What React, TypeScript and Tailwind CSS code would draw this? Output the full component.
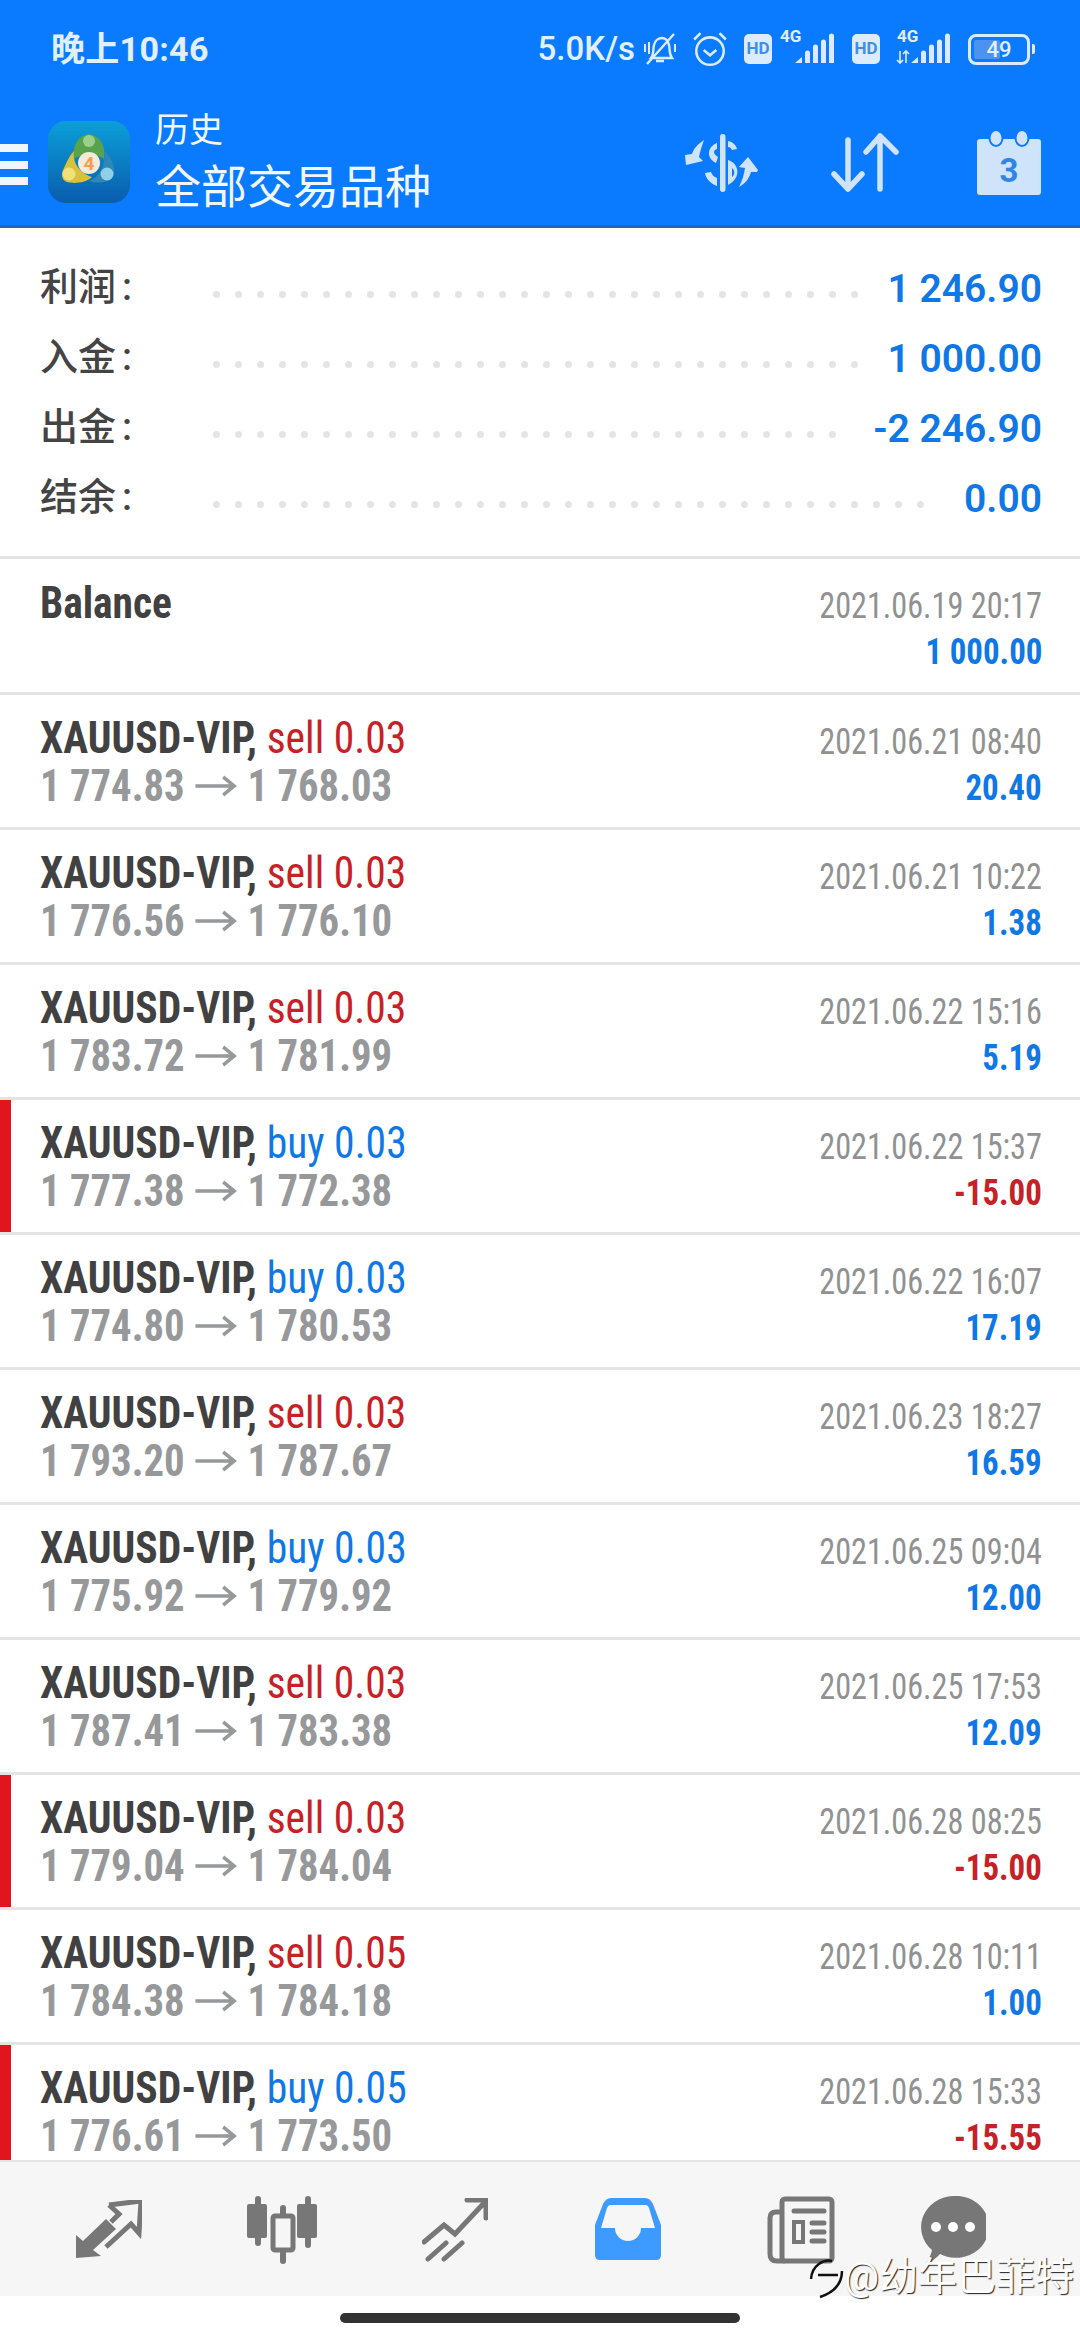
const trades = [
  { time: '2021.06.21 08:40', side: 'sell', lots: '0.03', open: '1 774.83', close: '1 768.03', profit: '20.40' },
  { time: '2021.06.21 10:22', side: 'sell', lots: '0.03', open: '1 776.56', close: '1 776.10', profit: '1.38' },
  { time: '2021.06.22 15:16', side: 'sell', lots: '0.03', open: '1 783.72', close: '1 781.99', profit: '5.19' },
  { time: '2021.06.22 15:37', side: 'buy', lots: '0.03', open: '1 777.38', close: '1 772.38', profit: '-15.00' },
  { time: '2021.06.22 16:07', side: 'buy', lots: '0.03', open: '1 774.80', close: '1 780.53', profit: '17.19' },
  { time: '2021.06.23 18:27', side: 'sell', lots: '0.03', open: '1 793.20', close: '1 787.67', profit: '16.59' },
  { time: '2021.06.25 09:04', side: 'buy', lots: '0.03', open: '1 775.92', close: '1 779.92', profit: '12.00' },
  { time: '2021.06.25 17:53', side: 'sell', lots: '0.03', open: '1 787.41', close: '1 783.38', profit: '12.09' },
  { time: '2021.06.28 08:25', side: 'sell', lots: '0.03', open: '1 779.04', close: '1 784.04', profit: '-15.00' },
  { time: '2021.06.28 10:11', side: 'sell', lots: '0.05', open: '1 784.38', close: '1 784.18', profit: '1.00' },
  { time: '2021.06.28 15:33', side: 'buy', lots: '0.05', open: '1 776.61', close: '1 773.50', profit: '-15.55' },
]

const stats = [
  { label: '利润', value: '1 246.90', dots: 30 },
  { label: '入金', value: '1 000.00', dots: 30 },
  { label: '出金', value: '-2 246.90', dots: 29 },
  { label: '结余', value: '0.00', dots: 33 },
]

function Signal({ arrows }: { arrows?: boolean }) {
  return (
    <svg width="58" height="32" viewBox="0 0 56 32" fill="#dcebff">
      <path d="M14 30 L21 24 V30 Z M24 30 V20 a2 2 0 0 1 5 0 V30 Z M32 30 V14 a2 2 0 0 1 5 0 V30 Z M40 30 V9 a2 2 0 0 1 5 0 V30 Z M48 30 V3 a2 2 0 0 1 5 0 V30 Z" />
      {arrows && <path d="M3 18 V30 M0 27 L3 30 L6 27 M9 30 V18 M6 21 L9 18 L12 21" stroke="#dcebff" strokeWidth="1.6" fill="none" />}
    </svg>
  )
}

function StatusBar() {
  return (
    <div className="h-[86px] flex items-start justify-between pl-[51px] pr-[45px] pt-[29px] text-[#e2efff]">
      <span className="text-[34px] leading-[40px] font-bold tracking-[0.3px]">晚上10:46</span>
      <div className="flex items-center h-[40px]">
        <span className="text-[33px] leading-[40px] font-medium mr-[7px]">5.0K/s</span>
        <svg className="mr-[13px]" width="36" height="34" viewBox="0 0 36 34" fill="none" stroke="#dcebff" strokeWidth="2.4">
          <path d="M9 26 C12 22 11 17 12 13 C13 8 17 6 20 6 C24 6 26 9 27 13 C28 18 27 22 30 26 Z M14 29 H22 M5 32 L32 2" />
          <path d="M3 12 V20 M7 10 V22 M33 12 V20" strokeWidth="2" />
        </svg>
        <svg className="mr-[15px]" width="38" height="38" viewBox="0 0 36 36" fill="none" stroke="#dcebff" strokeWidth="2.4">
          <circle cx="18" cy="20" r="13" />
          <path d="M12 19 L18 24 L24 19 M3 9 L9 3 M33 9 L27 3" />
        </svg>
        <div className="w-[28px] h-[30px] rounded-[5px] bg-[#dcebff] flex items-center justify-center text-[17px] font-bold text-[#3f8fe8] mr-[8px]">HD</div>
        <div className="relative w-[58px] h-[32px] mr-[14px]">
          <Signal />
          <span className="absolute left-0 top-[-6px] text-[17px] leading-[18px] font-bold">4G</span>
        </div>
        <div className="w-[28px] h-[30px] rounded-[5px] bg-[#dcebff] flex items-center justify-center text-[17px] font-bold text-[#3f8fe8] mr-[16px]">HD</div>
        <div className="relative w-[58px] h-[32px] mr-[14px]">
          <Signal arrows />
          <span className="absolute left-[1px] top-[-6px] text-[17px] leading-[18px] font-bold">4G</span>
        </div>
        <div className="w-[62px] h-[31px] rounded-[8px] border-[3px] border-[#dcebff] p-[3px] relative">
          <div className="h-full w-[26px] rounded-[2px] bg-[#4b93ee]" />
          <span className="absolute inset-0 flex items-center justify-center text-[22px] font-medium text-[#e2efff]">49</span>
        </div>
        <div className="w-[3px] h-[10px] rounded-r-[2px] bg-[#dcebff] ml-[2px]" />
      </div>
    </div>
  )
}

function MtLogo() {
  return (
    <svg width="82" height="82" viewBox="0 0 82 82">
      <defs>
        <linearGradient id="mt" x1="0" y1="0" x2="0" y2="1">
          <stop offset="0" stopColor="#0b9fd8" />
          <stop offset="1" stopColor="#0a5cae" />
        </linearGradient>
      </defs>
      <rect width="82" height="82" rx="18" fill="url(#mt)" />
      <path d="M41 13 C52 15 58 24 56 38 C50 33 32 33 26 38 C24 24 30 15 41 13 Z" fill="#5aa34c" />
      <circle cx="41" cy="20" r="6" fill="#9bd08c" />
      <path d="M26 30 C24 42 32 52 44 56 C38 62 26 63 19 61 C13 59 13 52 16 47 C19 41 21 35 26 30 Z" fill="#d9c23a" />
      <circle cx="21" cy="53" r="6.5" fill="#efe07b" />
      <path d="M56 30 C64 36 67 46 66 53 C65 60 52 64 41 60 C52 56 58 44 56 30 Z" fill="#2f86b8" />
      <circle cx="59" cy="53" r="6.5" fill="#8fd0e6" />
      <circle cx="41" cy="42" r="11" fill="#f4ead9" />
      <text x="41" y="49" textAnchor="middle" fontSize="19" fontWeight="700" fill="#f0a050" fontFamily="Roboto, sans-serif">4</text>
    </svg>
  )
}

function Header() {
  return (
    <div className="h-[142px] flex items-start border-b-[3px] border-[#1b69bd]">
      <div className="w-[28px] h-[41px] mt-[58px] flex flex-col justify-between">
        <div className="h-[8px] bg-[#eef6ff]" />
        <div className="h-[8px] bg-[#eef6ff]" />
        <div className="h-[8px] bg-[#eef6ff]" />
      </div>
      <div className="ml-[20px] mt-[35px]"><MtLogo /></div>
      <div className="ml-[25px] mt-[24px] text-[#f1f7ff] flex-1">
        <div className="text-[34px] leading-[40px]">历史</div>
        <div className="text-[46px] leading-[58px] mt-[8px]">全部交易品种</div>
      </div>
      <svg className="mt-[48px] mr-[-2px]" width="74" height="58" viewBox="0 0 74 58" fill="#cfe3fb">
        <rect x="35" y="0" width="5.5" height="58" rx="2.7" />
        <path d="M32 9 C22 13 21 24 31 29 L33 23 C28 20 28 16 32 15 Z M43 7 C48 8 51 11 52 15 L47 16 C46 14 45 13 43 13 Z M43 26 C54 29 57 44 43 51 Z M47 34 V43 C50 41 50 36 47 34 Z M32 38 V52 C26 50 21 45 20 39 L26 38 C27 41 29 43 32 44 Z" />
        <path d="M19 7 C12 12 9 15 7 21 L0 22 L1 32 L18 28 L14 24 C15 18 17 13 19 7 Z" transform="translate(0,-1)" />
        <path d="M54 53 C62 48 64 44 66 38 L72 38 L73 36 L63 23 L54 33 L60 34 C59 41 57 47 54 53 Z" />
      </svg>
      <svg className="ml-[74px] mt-[47px]" width="68" height="60" viewBox="0 0 68 60" fill="none" stroke="#cfe3fb" strokeWidth="5.5" strokeLinecap="round" strokeLinejoin="round">
        <path d="M17 7 V56 M3 41 L17 56 L31 41 M49 56 V3 M35 19 L49 3 L65 19" />
      </svg>
      <svg className="ml-[78px] mr-[39px] mt-[43px]" width="64" height="66" viewBox="0 0 64 66">
        <rect x="0" y="10" width="64" height="56" rx="3" fill="#cfe3fb" />
        <ellipse cx="19" cy="9" rx="6.5" ry="8" fill="#cfe3fb" stroke="#0a7bff" strokeWidth="2" />
        <ellipse cx="45" cy="9" rx="6.5" ry="8" fill="#cfe3fb" stroke="#0a7bff" strokeWidth="2" />
        <text x="32" y="53" textAnchor="middle" fontSize="33" fontWeight="700" fill="#2f86e6" fontFamily="Roboto, sans-serif">3</text>
      </svg>
    </div>
  )
}

function Trade({ t }: { t: (typeof trades)[number] }) {
  const loss = t.profit.startsWith('-')
  return (
    <div className="h-[135px] shrink-0 flex border-b-[3px] border-[#e4e4e4]">
      <div className={loss ? 'w-[11px] bg-[#e0161c]' : 'w-[11px]'} />
      <div className="flex-1 flex justify-between pl-[29px] pr-[38px] pt-[19px]">
        <div>
          <div className="text-[44px] leading-[48px] [font-stretch:75%] whitespace-nowrap origin-left scale-x-[0.945] w-[520px]">
            <span className="font-bold text-[#414141]">XAUUSD-VIP, </span>
            <span className={t.side === 'sell' ? 'text-[#c62127]' : 'text-[#0f78e6]'}>{t.side} {t.lots}</span>
          </div>
          <div className="text-[44px] leading-[48px] [font-stretch:75%] flex items-center whitespace-nowrap origin-left scale-x-[0.925] w-[520px] font-bold text-[#97989a]">
            <span>{t.open}</span>
            <svg className="mx-[11px]" width="46" height="22" viewBox="0 0 44 22" fill="none" stroke="#97989a" strokeWidth="3.5">
              <path d="M0 11 H42 M30 2 L42 11 L30 20" />
            </svg>
            <span>{t.close}</span>
          </div>
        </div>
        <div className="flex flex-col items-end">
          <div className="text-[37px] leading-[47px] mt-[4px] [font-stretch:75%] whitespace-nowrap origin-right scale-x-[0.87] text-[#919191]">{t.time}</div>
          <div className={'text-[37px] leading-[46px] [font-stretch:75%] whitespace-nowrap origin-right scale-x-[0.89] font-bold ' + (loss ? 'text-[#c62127]' : 'text-[#0f78e6]')}>{t.profit}</div>
        </div>
      </div>
    </div>
  )
}

function TabBar() {
  return (
    <div className="relative z-10 h-[136px] shrink-0 bg-[#f6f6f6] border-t-[2px] border-[#e4e4e4] flex items-start pt-[34px] pl-[22px]">
      <div className="w-[173px] flex justify-center">
        <svg width="66" height="60" viewBox="0 0 66 60" className="mt-[4px]">
          <path d="M0 58 V35 L7 41 L30 19 L40 29 L17 50 L25 56 Z" fill="#777" />
          <path d="M33 5 L65 1 L63 33 L55 24 L30 47 M33 5 L43 14 L35 22" fill="none" stroke="#777" strokeWidth="5" />
        </svg>
      </div>
      <div className="w-[173px] flex justify-center">
        <svg width="70" height="68" viewBox="0 0 70 68" fill="#777">
          <rect x="8" y="0" width="6" height="50" rx="3" />
          <rect x="0" y="8" width="20" height="34" rx="2" />
          <rect x="33" y="9" width="6" height="59" rx="3" />
          <rect x="26" y="20" width="20" height="34" rx="2" fill="#f6f6f6" stroke="#777" strokeWidth="5" />
          <rect x="58" y="0" width="6" height="52" rx="3" />
          <rect x="50" y="8" width="20" height="34" rx="2" />
        </svg>
      </div>
      <div className="w-[173px] flex justify-center">
        <svg width="66" height="64" viewBox="0 0 66 64" className="mt-[2px]" fill="none" stroke="#777" strokeWidth="5" strokeLinecap="round">
          <path d="M2 44 L22 27 L33 36 L63 4 M45 2 H64 V20 M6 61 L24 45 M22 61 L40 45" />
        </svg>
      </div>
      <div className="w-[173px] flex justify-center">
        <svg width="66" height="62" viewBox="0 0 66 62" className="mt-[2px]">
          <path d="M16 0 H50 Q55 0 58 6 L66 27 V57 Q66 62 61 62 H5 Q0 62 0 57 V27 L8 6 Q11 0 16 0 Z" fill="#3d9bff" />
          <path d="M15 7 H51 Q53 7 54 10 L60 30 H46 A13 13 0 0 1 20 30 H6 L12 10 Q13 7 15 7 Z" fill="#f6f6f6" />
        </svg>
      </div>
      <div className="w-[173px] flex justify-center">
        <svg width="68" height="68" viewBox="0 0 68 68" fill="none" stroke="#777" strokeWidth="5">
          <rect x="15" y="3" width="50" height="62" rx="3" />
          <path d="M15 16 H9 Q3 16 3 22 V58 Q3 65 10 65 H18" />
          <path d="M27 15 H57" strokeLinecap="round" />
          <rect x="27" y="26" width="9" height="20" strokeWidth="4" />
          <path d="M45 27 H57 M45 36 H57 M45 45 H57" strokeLinecap="round" />
        </svg>
      </div>
      <svg width="66" height="68" viewBox="0 0 66 68" className="ml-[33px]">
        <path d="M33 0 A33 31 0 1 1 20 58 Q14 65 6 67 Q11 60 12 54 A33 31 0 0 1 33 0 Z" fill="#777" />
        <circle cx="16" cy="31" r="5" fill="#fff" />
        <circle cx="33" cy="31" r="5" fill="#fff" />
        <circle cx="50" cy="31" r="5" fill="#fff" />
      </svg>
    </div>
  )
}

export default function App() {
  return (
    <div className="relative w-[1080px] h-[2340px] overflow-hidden bg-white flex flex-col font-['Roboto','Noto_Sans_CJK_SC',sans-serif]">
      <div className="bg-[#0a7bff] shrink-0">
        <StatusBar />
        <Header />
      </div>

      {/* Summary */}
      <div className="h-[331px] shrink-0 border-b-[3px] border-[#e4e4e4] pt-[24px] pl-[40px] pr-[38px]">
        {stats.map((s) => (
          <div key={s.label} className="h-[70px] flex items-center">
            <span className="w-[173px] text-[38px] leading-[46px] text-[#444] font-medium">{s.label}<span className="ml-[6px]">:</span></span>
            <div className="flex-1 flex gap-[15px] mt-[14px]">
              {Array.from({ length: s.dots }).map((_, i) => (
                <span key={i} className="w-[7px] h-[7px] rounded-full bg-[#e4e4e4]" />
              ))}
            </div>
            <span className="text-[39px] leading-[46px] mt-[3px] font-semibold text-[#0f78e6] whitespace-nowrap">{s.value}</span>
          </div>
        ))}
      </div>

      {/* Deals */}
      <div className="flex-1 min-h-0">
        <div className="h-[136px] flex justify-between border-b-[3px] border-[#e4e4e4] pl-[40px] pr-[38px] pt-[20px]">
          <div className="text-[44px] leading-[48px] font-bold text-[#414141] [font-stretch:75%] origin-left scale-x-[0.94]">Balance</div>
          <div className="flex flex-col items-end">
            <div className="text-[37px] leading-[47px] mt-[3px] whitespace-nowrap origin-right scale-x-[0.87] text-[#919191] [font-stretch:75%]">2021.06.19 20:17</div>
            <div className="text-[37px] leading-[46px] whitespace-nowrap origin-right scale-x-[0.89] font-bold text-[#0f78e6] [font-stretch:75%]">1 000.00</div>
          </div>
        </div>
        {trades.map((t) => (
          <Trade key={t.time} t={t} />
        ))}
      </div>

      <TabBar />

      <div className="relative z-10 h-[44px] shrink-0 bg-white flex justify-center pt-[17px]">
        <div className="w-[400px] h-[10px] rounded-full bg-[#333]" />
      </div>

      {/* Watermark */}
      <div className="absolute z-20 left-[808px] top-[2255px] flex items-center text-[39px] leading-[44px] text-white [text-shadow:1px_1px_1px_#222]">
        <svg width="36" height="44" viewBox="0 0 36 44" fill="none" stroke="#111" strokeWidth="2.5">
          <path d="M3 24 C4 10 16 4 24 6 M10 20 H30 M34 16 C34 30 24 38 12 42" />
        </svg>
        @幼年巴菲特
      </div>
    </div>
  )
}
